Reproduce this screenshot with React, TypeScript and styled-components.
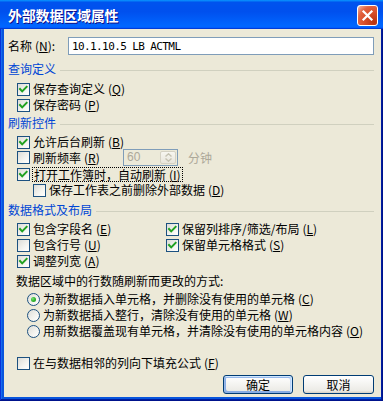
import React from 'react';
import styled, { createGlobalStyle } from 'styled-components';

const GlobalStyle = createGlobalStyle`
  html, body {
    margin: 0;
    padding: 0;
    background: #ffffff;
  }
  body {
    font-family: "Noto Sans CJK SC", "Liberation Sans", sans-serif;
    font-size: 12px;
    color: #000000;
  }
`;

const Window = styled.div`
  width: 383px;
  height: 401px;
  display: flex;
  flex-direction: column;
  background: #0831d9;
`;

const TitleBar = styled.div`
  height: 29px;
  flex: none;
  display: flex;
  align-items: flex-start;
  justify-content: space-between;
  padding: 0 5px 0 8px;
  background: linear-gradient(180deg, #0997ff, #0053ee 8%, #0050ee 40%, #0066ff 88%, #0066ff 93%, #005bff 95%, #003dd7 96%, #003dd7);
`;

const TitleText = styled.span`
  margin-top: 7px;
  line-height: 16px;
  font-size: 14px;
  font-weight: bold;
  color: #ffffff;
  letter-spacing: -0.2px;
  text-shadow: 1px 1px #0f1089;
`;

const CloseButton = styled.div`
  margin-top: 5px;
  width: 21px;
  height: 21px;
  box-sizing: border-box;
  border: 1px solid #ffffff;
  border-radius: 3px;
  background: radial-gradient(circle at 85% 85%, #b83210 0%, #d9502c 45%, #e2623f 70%, #f0a58e 92%, #ffffff 100%);
  display: flex;
  align-items: center;
  justify-content: center;
`;

const Frame = styled.div`
  flex: 1;
  display: flex;
  padding: 0 3px 4px 4px;
  background: #0855dd;
  box-shadow: inset -1px -1px #00138c, inset 1px 0 #0831d9, inset -2px -2px #001ea0, inset 2px 0 #166aee;
`;

const Client = styled.div`
  flex: 1;
  display: flex;
  flex-direction: column;
  padding: 8px 7px 0 4px;
  background: #ece9d8;
`;

const NameRow = styled.div`
  display: flex;
  align-items: center;
  height: 18px;
`;

const NameLabel = styled.span`
  width: 60px;
  line-height: 16px;
`;

const NameInput = styled.div`
  width: 306px;
  height: 18px;
  box-sizing: border-box;
  border: 1px solid #7f9db9;
  background: #ffffff;
  padding-left: 3px;
  display: flex;
  align-items: center;
  font-family: "DejaVu Sans Mono", "Liberation Mono", monospace;
  font-size: 11px;
  letter-spacing: -0.6px;
  white-space: pre;
`;

const Section = styled.div<{ $mt: number }>`
  display: flex;
  align-items: center;
  height: 16px;
  margin-top: ${p => p.$mt}px;
`;

const SectionLabel = styled.span`
  color: #0046d5;
  line-height: 16px;
`;

const SectionLine = styled.span`
  flex: 1;
  height: 1px;
  margin: 2px 0 0 4px;
  background: #d0d0bf;
`;

const Row = styled.div<{ $mt?: number; $indent?: number; $h?: number }>`
  display: flex;
  align-items: center;
  height: ${p => p.$h ?? 16}px;
  margin-top: ${p => p.$mt ?? 0}px;
  padding-left: ${p => p.$indent ?? 9}px;
  white-space: nowrap;
`;

const Box = styled.span`
  flex: none;
  width: 13px;
  height: 13px;
  box-sizing: border-box;
  border: 1px solid #1c5180;
  background: linear-gradient(135deg, #dcdcd7 0%, #f4f4f0 60%, #ffffff 100%);
  display: flex;
  align-items: center;
  justify-content: center;
`;

const RadioDot = styled.span`
  flex: none;
  width: 13px;
  height: 13px;
  box-sizing: border-box;
  border: 1px solid #1c5180;
  border-radius: 50%;
  background: linear-gradient(135deg, #dcdcd7 0%, #f4f4f0 60%, #ffffff 100%);
  display: flex;
  align-items: center;
  justify-content: center;
`;

const Dot = styled.span`
  width: 5px;
  height: 5px;
  border-radius: 50%;
  background: radial-gradient(circle at 35% 35%, #7be078 0%, #2fb52c 50%, #1a8f18 100%);
`;

const Text = styled.span<{ $w?: number; $muted?: boolean }>`
  margin-left: 3px;
  line-height: 16px;
  ${p => (p.$w ? `width: ${p.$w}px; flex: none;` : '')}
  color: ${p => (p.$muted ? '#aca899' : '#000000')};
`;

const FocusText = styled.span`
  margin-left: 2px;
  padding: 0 1px;
  height: 13px;
  line-height: 13px;
  border: 1px dotted #000000;
`;

const Mnemonic = styled.span`
  margin-left: 3px;
  u {
    text-decoration: underline;
    text-underline-offset: 1px;
  }
`;

const Spinner = styled.div`
  width: 55px;
  height: 17px;
  box-sizing: border-box;
  border: 1px solid #7f9db9;
  background: #ecead9;
  display: flex;
  align-items: stretch;
  justify-content: space-between;
  padding: 1px;
`;

const SpinValue = styled.span`
  padding-left: 2px;
  line-height: 13px;
  color: #aca899;
  font-family: "Liberation Sans", sans-serif;
  font-size: 12px;
`;

const SpinButtons = styled.span`
  width: 14px;
  display: flex;
  flex-direction: column;
  border: 1px solid #d5d2c4;
  border-radius: 2px;
  background: linear-gradient(180deg, #f7f6f0, #e8e6dc);
  align-items: center;
  justify-content: space-around;
`;

const Unit = styled.span`
  margin-left: 10px;
  color: #aca899;
  line-height: 16px;
`;

const FormatGrid = styled.div`
  display: grid;
  grid-template-columns: 149px 1fr;
  grid-auto-rows: 16px;
  margin-top: 3px;
`;

const GridRow = styled(Row)`
  padding-left: 9px;
`;

const Paragraph = styled.div`
  margin-top: 4px;
  padding-left: 8px;
  line-height: 16px;
`;

const RadioGroup = styled.div`
  display: flex;
  flex-direction: column;
  margin-top: 2px;
`;

const ButtonBar = styled.div`
  display: flex;
  justify-content: flex-end;
  gap: 10px;
  margin-top: 4px;
`;

const Button = styled.button<{ $default?: boolean; $w: number }>`
  width: ${p => p.$w}px;
  height: 19px;
  padding: 0;
  border: 1px solid #003c74;
  border-radius: 3px;
  background: linear-gradient(180deg, #ffffff, #ecebe6 86%, #d6d0c5);
  font-family: "Noto Sans CJK SC", sans-serif;
  font-size: 12px;
  line-height: 16px;
  color: #000000;
  box-shadow: ${p =>
    p.$default
      ? 'inset -1px 1px #cee7ff, inset 1px 2px #98b8ea, inset -2px 2px #bcd4f6, inset 1px -1px #89ade4, inset 2px -2px #89ade4'
      : 'none'};
`;

const CheckMark = () => (
  <svg width="11" height="11" viewBox="0 0 11 11">
    <path d="M2 5 L4.2 7.4 L8.6 2.8" fill="none" stroke="#21a121" strokeWidth="2" strokeLinecap="square" />
  </svg>
);

const Checkbox: React.FC<{ checked?: boolean }> = ({ checked }) => <Box>{checked && <CheckMark />}</Box>;

const Key: React.FC<{ k: string }> = ({ k }) => (
  <Mnemonic>
    (<u>{k}</u>)
  </Mnemonic>
);

const CheckRow: React.FC<{ checked?: boolean; label: string; k: string; mt?: number; indent?: number }> = ({
  checked,
  label,
  k,
  mt,
  indent,
}) => (
  <Row $mt={mt} $indent={indent}>
    <Checkbox checked={checked} />
    <Text>
      {label}
      <Key k={k} />
    </Text>
  </Row>
);

const radios = [
  { label: '为新数据插入单元格，并删除没有使用的单元格', k: 'C', checked: true },
  { label: '为新数据插入整行，清除没有使用的单元格', k: 'W' },
  { label: '用新数据覆盖现有单元格，并清除没有使用的单元格内容', k: 'O' },
];

const App: React.FC = () => (
  <>
    <GlobalStyle />
    <Window>
      <TitleBar>
        <TitleText>外部数据区域属性</TitleText>
        <CloseButton>
          <svg width="13" height="13" viewBox="0 0 13 13">
            <path d="M2.5 2.5 L10.5 10.5 M10.5 2.5 L2.5 10.5" stroke="#ffffff" strokeWidth="2.2" strokeLinecap="square" />
          </svg>
        </CloseButton>
      </TitleBar>
      <Frame>
        <Client>
          <NameRow>
            <NameLabel>
              名称<Key k="N" />:
            </NameLabel>
            <NameInput>10.1.10.5 LB ACTML</NameInput>
          </NameRow>

          <Section $mt={6}>
            <SectionLabel>查询定义</SectionLabel>
            <SectionLine />
          </Section>
          <CheckRow mt={4} checked label="保存查询定义" k="Q" />
          <CheckRow checked label="保存密码" k="P" />

          <Section $mt={2}>
            <SectionLabel>刷新控件</SectionLabel>
            <SectionLine />
          </Section>
          <CheckRow mt={3} checked label="允许后台刷新" k="B" />
          <Row $mt={-1} $h={17}>
            <Checkbox />
            <Text $w={90}>
              刷新频率<Key k="R" />
            </Text>
            <Spinner>
              <SpinValue>60</SpinValue>
              <SpinButtons>
                <svg width="7" height="4" viewBox="0 0 7 4">
                  <path d="M0.5 3.5 L3.5 0.8 L6.5 3.5" fill="none" stroke="#c5c2b2" strokeWidth="1.4" />
                </svg>
                <svg width="7" height="4" viewBox="0 0 7 4">
                  <path d="M0.5 0.5 L3.5 3.2 L6.5 0.5" fill="none" stroke="#c5c2b2" strokeWidth="1.4" />
                </svg>
              </SpinButtons>
            </Spinner>
            <Unit>分钟</Unit>
          </Row>
          <Row>
            <Checkbox checked />
            <FocusText>
              打开工作簿时，自动刷新<Key k="I" />
            </FocusText>
          </Row>
          <CheckRow indent={25} label="保存工作表之前删除外部数据" k="D" />

          <Section $mt={4}>
            <SectionLabel>数据格式及布局</SectionLabel>
            <SectionLine />
          </Section>
          <FormatGrid>
            <GridRow>
              <Checkbox checked />
              <Text>
                包含字段名<Key k="E" />
              </Text>
            </GridRow>
            <GridRow>
              <Checkbox checked />
              <Text>
                保留列排序/筛选/布局<Key k="L" />
              </Text>
            </GridRow>
            <GridRow>
              <Checkbox />
              <Text>
                包含行号<Key k="U" />
              </Text>
            </GridRow>
            <GridRow>
              <Checkbox checked />
              <Text>
                保留单元格格式<Key k="S" />
              </Text>
            </GridRow>
            <GridRow>
              <Checkbox checked />
              <Text>
                调整列宽<Key k="A" />
              </Text>
            </GridRow>
          </FormatGrid>

          <Paragraph>数据区域中的行数随刷新而更改的方式:</Paragraph>
          <RadioGroup>
            {radios.map(r => (
              <Row key={r.k} $indent={19}>
                <RadioDot>{r.checked && <Dot />}</RadioDot>
                <Text>
                  {r.label}
                  <Key k={r.k} />
                </Text>
              </Row>
            ))}
          </RadioGroup>

          <CheckRow mt={16} label="在与数据相邻的列向下填充公式" k="F" />

          <ButtonBar>
            <Button $default $w={70}>
              确定
            </Button>
            <Button $w={71}>取消</Button>
          </ButtonBar>
        </Client>
      </Frame>
    </Window>
  </>
);

export default App;
